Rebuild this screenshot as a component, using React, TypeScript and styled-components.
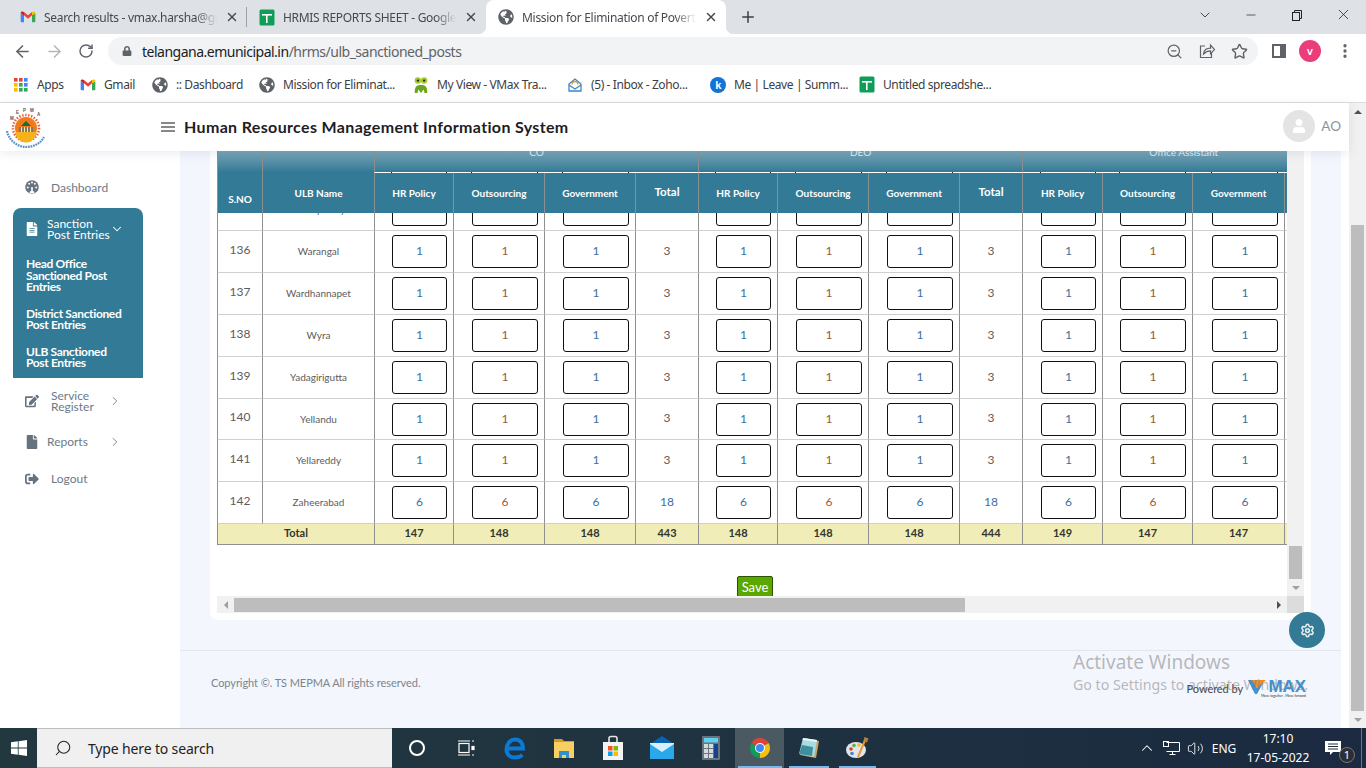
import React from 'react';
import styled, { createGlobalStyle } from 'styled-components';
import {
  ArrowLeft,
  ArrowRight,
  ChevronDown,
  ChevronRight,
  ChevronUp,
  MoreVertical,
  Plus,
  RotateCw,
  Settings,
  Star,
  Volume2,
  X,
  ZoomOut,
  Search,
  Minus,
} from 'lucide-react';
import {
  FaEdit,
  FaFile,
  FaFileAlt,
  FaGlobeAmericas,
  FaLock,
  FaSignOutAlt,
  FaUser,
} from 'react-icons/fa';

const APP_FONT = '"Lato", "Noto Sans", sans-serif';
const UI_FONT = '"Noto Sans", "Open Sans", sans-serif';
const TEAL = '#337a96';

const GlobalStyle = createGlobalStyle`
  html, body {
    margin: 0;
    padding: 0;
    width: 1366px;
    height: 768px;
    overflow: hidden;
    background: #fff;
  }
  * { box-sizing: border-box; }
`;

const Screen = styled.div`
  position: relative;
  width: 1366px;
  height: 768px;
  display: flex;
  flex-direction: column;
  overflow: hidden;
  font-family: ${APP_FONT};
`;

/* browser chrome */
const TabStrip = styled.div`
  height: 34px;
  background: #dee1e6;
  display: flex;
  align-items: stretch;
  padding-left: 8px;
  font-family: ${UI_FONT};
`;

const Tab = styled.div<{ $w: number; $active?: boolean }>`
  position: relative;
  width: ${(p) => p.$w}px;
  padding: 0 8px 0 12px;
  display: flex;
  align-items: center;
  gap: 8px;
  background: ${(p) => (p.$active ? '#fff' : 'transparent')};
  border-radius: 8px 8px 0 0;
  ${(p) =>
    p.$active &&
    `
    &::before, &::after {
      content: '';
      position: absolute;
      bottom: 0;
      width: 8px;
      height: 8px;
    }
    &::before { left: -8px; background: radial-gradient(circle at 0 0, transparent 8px, #fff 8.5px); }
    &::after { right: -8px; background: radial-gradient(circle at 100% 0, transparent 8px, #fff 8.5px); }
  `}
`;

const TabTitle = styled.span`
  flex: 1;
  min-width: 0;
  font-size: 12px;
  letter-spacing: -0.3px;
  white-space: nowrap;
  overflow: hidden;
  color: #45494e;
  -webkit-mask-image: linear-gradient(90deg, #000 88%, transparent);
  mask-image: linear-gradient(90deg, #000 88%, transparent);
`;

const TabDivider = styled.i`
  width: 1px;
  height: 20px;
  margin: 7px 0 0 -1px;
  background: #9da1a6;
`;

const NewTab = styled.div`
  width: 28px;
  margin-left: 8px;
  display: flex;
  align-items: center;
  justify-content: center;
  color: #3c4043;
`;

const WindowControls = styled.div`
  margin-left: auto;
  display: flex;
  align-items: flex-start;
  color: #222;
`;

const WinButton = styled.div<{ $w: number }>`
  width: ${(p) => p.$w}px;
  height: 29px;
  display: flex;
  align-items: center;
  justify-content: center;
`;

const Toolbar = styled.div`
  height: 34px;
  background: #fff;
  display: flex;
  align-items: center;
  padding-left: 6px;
  color: #5f6368;
`;

const NavButton = styled.div<{ $faded?: boolean }>`
  width: 32px;
  display: flex;
  justify-content: center;
  color: ${(p) => (p.$faded ? '#b4b7ba' : '#5f6368')};
`;

const Omnibox = styled.div`
  width: 1150px;
  height: 28px;
  margin-left: 6px;
  padding: 0 10px 0 14px;
  border-radius: 14px;
  background: #f1f3f4;
  display: flex;
  align-items: center;
  font-family: ${UI_FONT};
`;

const UrlText = styled.div`
  margin-left: 10px;
  font-size: 14px;
  letter-spacing: -0.5px;
  color: #202124;
  span { color: #5f6368; }
`;

const OmniActions = styled.div`
  margin-left: auto;
  display: flex;
  align-items: center;
  gap: 15px;
  color: #5f6368;
`;

const ToolbarEnd = styled.div`
  display: flex;
  align-items: center;
  margin-left: 13px;
`;

const ProfileDot = styled.div`
  width: 22px;
  height: 22px;
  margin-left: 12px;
  border-radius: 50%;
  background: #ec3d7b;
  color: #fff;
  font-size: 9px;
  font-weight: 700;
  display: flex;
  align-items: center;
  justify-content: center;
  font-family: ${UI_FONT};
`;

const MenuDots = styled.div`
  margin-left: 15px;
  display: flex;
`;

const BookmarkBar = styled.div`
  height: 35px;
  padding: 0 0 1px 13px;
  background: #fff;
  border-bottom: 1px solid #dadce0;
  display: flex;
  align-items: center;
  font-family: ${UI_FONT};
`;

const Bookmark = styled.div<{ $w: number }>`
  width: ${(p) => p.$w}px;
  display: flex;
  align-items: center;
  gap: 8px;
  font-size: 12px;
  letter-spacing: -0.4px;
  color: #3c4043;
  white-space: nowrap;
  overflow: hidden;
  svg { flex: none; }
`;

/* page */
const Viewport = styled.div`
  flex: 1;
  min-height: 0;
  display: flex;
`;

const PageColumn = styled.div`
  flex: 1;
  min-width: 0;
  display: flex;
  flex-direction: column;
`;

const TopBar = styled.header`
  position: relative;
  z-index: 2;
  height: 48px;
  flex: none;
  background: #fff;
  box-shadow: 0 2px 10px rgba(60, 80, 120, 0.12);
  display: flex;
  align-items: center;
  padding: 0 0 2px 5px;
`;

const LogoBox = styled.div`
  display: flex;
  margin-top: 3px;
`;

const Hamburger = styled.div`
  width: 14px;
  height: 10px;
  margin: 2px 9px 0 115px;
  border-top: 2px solid #888;
  border-bottom: 2px solid #888;
  position: relative;
  &::after {
    content: '';
    position: absolute;
    left: 0;
    right: 0;
    top: 2px;
    height: 2px;
    background: #888;
  }
`;

const SystemTitle = styled.h1`
  margin: 0;
  font-size: 16px;
  font-weight: 700;
  letter-spacing: 0.35px;
  color: #1c2024;
`;

const UserBox = styled.div`
  margin-left: auto;
  display: flex;
  align-items: center;
  gap: 6px;
  padding-right: 8px;
  color: #8a949c;
  font-size: 13.5px;
`;

const Avatar = styled.div`
  width: 32px;
  height: 32px;
  border-radius: 50%;
  background: #e4e4e4;
  color: #fff;
  display: flex;
  align-items: center;
  justify-content: center;
`;

const Below = styled.div`
  flex: 1;
  min-height: 0;
  display: flex;
`;

const Sidebar = styled.nav`
  width: 180px;
  flex: none;
  padding-top: 17px;
  background: #fff;
  font-size: 12px;
  color: #6b7a88;
`;

const NavRow = styled.div<{ $h: number }>`
  height: ${(p) => p.$h}px;
  padding: 0 58px 0 25px;
  display: flex;
  align-items: center;
  line-height: 11px;
`;

const IconSlot = styled.span<{ $w?: number }>`
  width: ${(p) => p.$w ?? 26}px;
  flex: none;
  display: flex;
  color: #66727e;
`;

const NavArrow = styled.span`
  margin-left: auto;
  display: flex;
`;

const ActivePanel = styled.div`
  width: 130px;
  margin: 2px 0 0 13px;
  padding: 10px 21px 9px 12px;
  border-radius: 8px 8px 0 0;
  background: ${TEAL};
  color: #fff;
  font-size: 12px;
  line-height: 11.5px;
`;

const PanelHead = styled.div`
  display: flex;
  align-items: center;
  margin-bottom: 18px;
  line-height: 11px;
  white-space: nowrap;
  svg { flex: none; }
`;

const PanelIcon = styled.span`
  width: 22px;
  flex: none;
  display: flex;
`;

const PanelLink = styled.div`
  margin: 0 -20px 15px 1px;
  font-weight: 700;
  letter-spacing: -0.35px;
  white-space: nowrap;
  &:last-child { margin-bottom: 0; }
`;

const Main = styled.main`
  flex: 1;
  min-width: 0;
  display: flex;
  flex-direction: column;
  margin-right: 8px;
  background: #f3f6fd;
`;

const Card = styled.section`
  height: 469px;
  flex: none;
  margin: 0 30px;
  padding: 0 7px 7px;
  background: #fff;
  border-radius: 0 0 8px 8px;
`;

const ScrollFrame = styled.div`
  height: 462px;
  display: grid;
  grid-template-columns: 1070px 17px;
  grid-template-rows: 445px 17px;
`;

const TableViewport = styled.div`
  overflow: hidden;
  background: #fff;
`;

const GridTable = styled.table<{ $width: number }>`
  width: ${(p) => p.$width}px;
  table-layout: fixed;
  border-collapse: separate;
  border-spacing: 0;
`;

const HeadTable = styled(GridTable)`
  position: relative;
  z-index: 1;
  margin-top: -6px;
  background: linear-gradient(#8fb2c1 0, ${TEAL} 27px);
  color: #fff;
`;

const CornerHead = styled.th<{ $pb: number }>`
  vertical-align: bottom;
  padding: 0 0 ${(p) => p.$pb}px;
  border-left: 1px solid #8a8f92;
  font-size: 10px;
  font-weight: 700;
`;

const GroupHead = styled.th`
  height: 28px;
  vertical-align: top;
  padding: 2px 0 0;
  border-left: 1px solid #8a8f92;
  border-bottom: 1px solid #fff;
  font-size: 10px;
  line-height: 10px;
  font-weight: 400;
  color: #e3edf1;
`;

const SubHead = styled.th<{ $isTotal?: boolean; $tickW?: number }>`
  position: relative;
  height: 40px;
  padding: 0 0 ${(p) => (p.$isTotal ? 4 : 0)}px;
  border-left: 1px solid #8a8f92;
  font-size: ${(p) => (p.$isTotal ? 11.5 : 10)}px;
  font-weight: 700;
  ${(p) =>
    !p.$isTotal &&
    `
    &::before, &::after {
      content: '';
      position: absolute;
      top: -1px;
      width: 1px;
      height: 1px;
      background: #222;
    }
    &::before { right: ${(p.$tickW ?? 0) + 6}px; }
    &::after { right: 6px; }
  `}
`;

const BodyClip = styled.div`
  height: 311px;
  overflow: hidden;
`;

const BodyTable = styled(GridTable)`
  margin-top: -24px;
`;

const BodyCell = styled.td<{ $tone?: string; $small?: boolean; $h?: number; $pb?: number }>`
  height: ${(p) => p.$h ?? 42}px;
  padding: 0 0 ${(p) => p.$pb ?? (p.$small ? 1 : 3)}px;
  text-align: center;
  border-left: 1px solid #8f8f8f;
  border-bottom: 1px solid #cfcfcf;
  font-size: ${(p) => (p.$small ? 10 : 12)}px;
  color: ${(p) => p.$tone ?? '#5c5c5c'};
`;

const InputCell = styled(BodyCell)`
  padding: 0 6px 0 0;
`;

const CountInput = styled.input<{ $w: number; $tone: string }>`
  display: block;
  width: ${(p) => p.$w}px;
  height: 33px;
  margin-left: auto;
  padding: 0 0 2px;
  border: 1px solid #111;
  border-radius: 3px;
  background: #fff;
  outline: none;
  text-align: center;
  font-family: ${APP_FONT};
  font-size: 12px;
  color: ${(p) => p.$tone};
`;

const FootCell = styled.td`
  height: 21px;
  padding: 0 0 3px;
  text-align: center;
  background: #f0edb8;
  border-left: 1px solid #8f8f8f;
  border-bottom: 1px solid #8f8f8f;
  font-size: 11px;
  font-weight: 700;
  color: #33352f;
`;

const SaveRow = styled.div`
  display: flex;
  justify-content: center;
  padding: 31px 0 0 6px;
`;

const SaveButton = styled.button`
  width: 36px;
  height: 21px;
  padding: 0;
  border: 1px solid #2c5300;
  border-radius: 2px;
  background: #5aa700;
  color: #fff;
  font-family: ${APP_FONT};
  font-size: 13px;
`;

const ScrollTrackY = styled.div`
  background: #f1f1f1;
  display: flex;
  flex-direction: column;
  justify-content: flex-end;
  align-items: center;
`;

const ThumbY = styled.div<{ $h: number; $w: number }>`
  width: ${(p) => p.$w}px;
  height: ${(p) => p.$h}px;
  background: #bdbdbd;
`;

const ScrollTrackX = styled.div`
  background: #f1f1f1;
  display: flex;
  align-items: center;
`;

const ThumbX = styled.div`
  width: 731px;
  height: 14px;
  background: #bdbdbd;
`;

const ScrollButton = styled.div<{ $end?: boolean }>`
  width: 17px;
  height: 17px;
  flex: none;
  margin-left: ${(p) => (p.$end ? 'auto' : '0')};
  display: flex;
  align-items: center;
  justify-content: center;
`;

const ArrowGlyph = styled.i<{ $dir: 'up' | 'down' | 'left' | 'right'; $color?: string }>`
  width: 0;
  height: 0;
  border: 4px solid transparent;
  ${(p) => {
    const c = p.$color ?? '#505050';
    if (p.$dir === 'up') return `border-bottom-color:${c};border-top-width:0;`;
    if (p.$dir === 'down') return `border-top-color:${c};border-bottom-width:0;`;
    if (p.$dir === 'left') return `border-right-color:${c};border-left-width:0;`;
    return `border-left-color:${c};border-right-width:0;`;
  }}
`;

const ScrollCorner = styled.div`
  background: #dcdcdc;
`;

const PageScrollbar = styled.div`
  width: 17px;
  flex: none;
  background: #f1f1f1;
  display: flex;
  flex-direction: column;
  align-items: center;
`;

const PageThumbWrap = styled.div`
  margin-top: auto;
  display: flex;
  flex-direction: column;
  align-items: center;
`;

const Footer = styled.footer`
  flex: 1;
  margin-top: 30px;
  padding: 0 35px 15px 31px;
  border-top: 1px solid #e2e6ee;
  display: flex;
  justify-content: space-between;
  align-items: center;
  font-size: 11px;
  letter-spacing: -0.07px;
  color: #7c858c;
`;

const PoweredBy = styled.div`
  display: flex;
  align-items: center;
  gap: 3px;
  margin-top: 12px;
  color: #444;
`;

const VmaxLogo = styled.div`
  display: flex;
  flex-direction: column;
  align-items: flex-end;
  width: 60px;
`;

const VmaxMark = styled.div`
  display: flex;
  align-items: center;
  font-family: "Liberation Sans", sans-serif;
  font-size: 17px;
  font-weight: 700;
  line-height: 15px;
  color: #3f93d8;
`;

const VmaxTag = styled.div`
  font-size: 3.5px;
  line-height: 4px;
  color: #333;
  white-space: nowrap;
`;

const GearFab = styled.div`
  position: absolute;
  left: 1289px;
  top: 612px;
  width: 36px;
  height: 36px;
  border-radius: 50%;
  background: ${TEAL};
  color: #e8f0f3;
  display: flex;
  align-items: center;
  justify-content: center;
`;

const Watermark = styled.div`
  position: absolute;
  left: 1073px;
  top: 650px;
  pointer-events: none;
  font-family: ${UI_FONT};
  color: rgba(120, 120, 120, 0.5);
  white-space: nowrap;
`;

const WatermarkTitle = styled.div`
  font-size: 19px;
  line-height: 24px;
`;

const WatermarkHint = styled.div`
  font-size: 14.2px;
  line-height: 21px;
`;

/* windows taskbar */
const Taskbar = styled.div`
  height: 40px;
  flex: none;
  background: linear-gradient(90deg, #22383f, #1f3340 50%, #1b2a40);
  display: flex;
  align-items: stretch;
  color: #fff;
  font-family: ${UI_FONT};
`;

const StartButton = styled.div`
  width: 37px;
  display: flex;
  align-items: center;
  justify-content: center;
`;

const SearchBox = styled.div`
  width: 355px;
  background: #f0f0f0;
  border-top: 1px solid #bdbdbd;
  border-bottom: 1px solid #bdbdbd;
  display: flex;
  align-items: center;
  padding-left: 17px;
  gap: 16px;
  font-size: 14px;
  letter-spacing: -0.15px;
  color: #222;
`;

const SearchGlass = styled(Search)`
  transform: scaleX(-1);
`;

const TaskSlot = styled.div<{ $active?: boolean; $line?: number }>`
  position: relative;
  width: 49px;
  display: flex;
  align-items: center;
  justify-content: center;
  background: ${(p) => (p.$active ? '#4a5962' : 'transparent')};
  ${(p) =>
    p.$line &&
    `
    &::after {
      content: '';
      position: absolute;
      bottom: 0;
      left: 50%;
      width: ${p.$line}px;
      margin-left: -${p.$line / 2}px;
      height: 2px;
      background: #76b9ed;
    }
  `}
`;

const Tray = styled.div`
  margin-left: auto;
  display: flex;
  align-items: stretch;
`;

const TraySlot = styled.div<{ $w: number }>`
  width: ${(p) => p.$w}px;
  display: flex;
  align-items: center;
  justify-content: center;
  font-size: 12px;
`;

const Clock = styled.div`
  width: 74px;
  display: flex;
  flex-direction: column;
  align-items: center;
  justify-content: center;
  font-size: 12px;
  line-height: 19px;
`;

const NoticeSlot = styled.div`
  position: relative;
  width: 46px;
  padding: 11px 0 0 10px;
`;

const NoticeBadge = styled.div`
  position: absolute;
  left: 24px;
  top: 19px;
  width: 16px;
  height: 16px;
  border-radius: 50%;
  border: 1px solid #777;
  background: #2b2f33;
  font-size: 11px;
  line-height: 14px;
  text-align: center;
`;

const TrayEnd = styled.div`
  width: 5px;
  border-left: 1px solid #6d7780;
`;

/* drawn icons */
const GmailIcon = () => (
  <svg width="16" height="16" viewBox="0 0 24 24">
    <path fill="#4285f4" d="M1 6.5 6 9v11H2.5A1.5 1.5 0 0 1 1 18.500z" />
    <path fill="#34a853" d="M23 6.500 18 9v11h3.500a1.500 1.500 0 0 0 1.500-1.500z" />
    <path fill="#ea4335" d="M6 9.500V4.500L12 9.500 18 4.500v5l-6 5z" />
    <path fill="#c5221f" d="M1 5.800C1 4 3.400 3 4.800 4.100L6 5v4.700L1 6z" />
    <path fill="#fbbc04" d="M23 5.800C23 4 20.600 3 19.200 4.100L18 5v4.700L23 6z" />
  </svg>
);

const SheetIcon = () => (
  <svg width="16" height="17" viewBox="0 0 16 17">
    <rect x="0.500" y="0.500" width="15" height="16" rx="1.500" fill="#0f9d58" />
    <rect x="3" y="5" width="10" height="1.600" fill="#fff" />
    <rect x="7" y="5" width="1.600" height="9" fill="#fff" />
  </svg>
);

const AppsIcon = () => (
  <svg width="16" height="16" viewBox="0 0 16 16">
    {['#ea4335', '#ea4335', '#4285f4', '#fbbc04', '#34a853', '#4285f4', '#fbbc04', '#34a853', '#34a853'].map((c, i) => (
      <rect key={i} x={1 + (i % 3) * 5} y={1 + Math.floor(i / 3) * 5} width="3.600" height="3.600" fill={c} />
    ))}
  </svg>
);

const FrogIcon = () => (
  <svg width="16" height="18" viewBox="0 0 18 20">
    <path d="M2 19c0-6 1-9 7-9s7 3 7 9h-3l-1-4-3 4-3-4-1 4z" fill="#6aa51f" />
    <circle cx="5.500" cy="5" r="3.600" fill="#a6c92f" />
    <circle cx="12.500" cy="5" r="3.600" fill="#a6c92f" />
    <circle cx="5.500" cy="5" r="1.300" fill="#222" />
    <circle cx="12.500" cy="5" r="1.300" fill="#222" />
  </svg>
);

const ZohoIcon = () => (
  <svg width="16" height="16" viewBox="0 0 16 16" fill="none">
    <path d="M2 7l6-5 6 5v7H2z" stroke="#3a87c8" strokeWidth="1.300" />
    <path d="M2 8l6 4 6-4" stroke="#3a87c8" strokeWidth="1.300" />
    <path d="M5 7.500a3 3 0 0 1 6 0" stroke="#e8912d" strokeWidth="1.300" />
  </svg>
);

const KekaIcon = () => (
  <svg width="16" height="16" viewBox="0 0 16 16">
    <circle cx="8" cy="8" r="8" fill="#1473d8" />
    <text x="8" y="12" fontSize="11" fontWeight="700" fill="#fff" textAnchor="middle" fontFamily="Liberation Sans">k</text>
  </svg>
);

const ShareIcon = () => (
  <svg width="18" height="18" viewBox="0 0 18 18" fill="none" stroke="#5f6368" strokeWidth="1.200">
    <path d="M7 4H2.500v11.500h11V11" />
    <path d="M5.500 12c.5-4 3-5.800 7-5.800V3l4 4.500-4 4.300V8.800c-3 0-5 1-7 3.200z" />
  </svg>
);

const SidePanelIcon = () => (
  <svg width="16" height="16" viewBox="0 0 16 16">
    <rect x="1" y="1" width="14" height="14" fill="#5f6368" />
    <rect x="3" y="3" width="6" height="10" fill="#fff" />
  </svg>
);

const RestoreIcon = () => (
  <svg width="12" height="12" viewBox="0 0 12 12" fill="none" stroke="#222">
    <rect x="1.500" y="3.500" width="7" height="8" />
    <path d="M3.500 3.500v-2h7v8h-2" />
  </svg>
);

const GaugeIcon = () => (
  <svg width="14" height="14" viewBox="0 0 14 14">
    <circle cx="7" cy="7" r="6.800" fill="#66727e" />
    <g fill="#fff">
      <circle cx="2.800" cy="7.500" r="1" />
      <circle cx="4.200" cy="3.800" r="1" />
      <circle cx="7" cy="2.500" r="1" />
      <circle cx="9.800" cy="3.800" r="1" />
      <circle cx="11.200" cy="7.500" r="1" />
    </g>
    <path d="M7 12V7" stroke="#fff" strokeWidth="1.600" />
    <path d="M4.500 13.200h5L9 11.200H5z" fill="#fff" />
  </svg>
);

const MepmaLogo = () => (
  <svg width="41" height="42" viewBox="0 0 41 42">
    <g fontSize="4.500" fontWeight="700" fill="#555" fontFamily="Liberation Sans">
      <text x="5" y="13">M</text>
      <text x="11" y="7">E</text>
      <text x="18" y="4.500">P</text>
      <text x="25" y="5">M</text>
      <text x="32" y="9">A</text>
    </g>
    <circle cx="21" cy="21" r="13" fill="none" stroke="#ea5a2c" strokeWidth="2.600" strokeDasharray="1.400 1.600" />
    <circle cx="21" cy="21" r="11" fill="#f07b1c" />
    <path d="M10.500 25h21a10.500 10.500 0 0 1-21 0z" fill="#f5b21a" />
    <path d="M21 14l5 5H16z" fill="#1e6a3a" />
    <rect x="14" y="20" width="14" height="5" fill="#fbe6a8" />
    <path d="M15 20v5M18 20v5M21 20v5M24 20v5M27 20v5" stroke="#30303a" strokeWidth="1.200" />
    <path d="M2 24c2 10 11 16 19 16s15-4 18-10" fill="none" stroke="#5c93c9" strokeWidth="2.200" strokeDasharray="1.800 .8" />
  </svg>
);

const WindowsLogo = () => (
  <svg width="16" height="16" viewBox="0 0 16 16" fill="#fff">
    <path d="M0 2.300 6.800 1.300v6.300H0zM7.600 1.200 16 0v7.600H7.600zM0 8.400h6.800v6.300L0 13.700zM7.600 8.400H16V16l-8.400-1.200z" />
  </svg>
);

const TaskViewIcon = () => (
  <svg width="18" height="18" viewBox="0 0 18 18" fill="none" stroke="#fff" strokeWidth="1.200">
    <rect x="2" y="4.500" width="10" height="9" />
    <path d="M1 2h12M1 16h12M15 2h2M15 16h2" />
    <rect x="15" y="7.500" width="2" height="3" fill="#fff" />
  </svg>
);

const EdgeIcon = () => (
  <svg width="24" height="24" viewBox="0 0 24 24" fill="none">
    <path d="M4.500 12.500H20C20 7 17 3.500 12 3.500 7 3.500 3.500 8 3.500 13.500 3.500 18.500 7 21.500 12 21.500c3 0 5.500-.8 7.500-2.300" stroke="#0a7ad6" strokeWidth="4" />
  </svg>
);

const ExplorerIcon = () => (
  <svg width="24" height="24" viewBox="0 0 24 24">
    <path d="M2 3h8l2 2h10v4H2z" fill="#d99a1e" />
    <rect x="2" y="6" width="20" height="16" fill="#f7cf62" />
    <path d="M7 22v-7h10v7h-3v-3h-4v3z" fill="#2f8fd0" />
  </svg>
);

const StoreIcon = () => (
  <svg width="24" height="26" viewBox="0 0 24 26">
    <path d="M8 7V3.500a2 2 0 0 1 2-2h4a2 2 0 0 1 2 2V7" fill="none" stroke="#e4e4e4" strokeWidth="1.600" />
    <rect x="2" y="7" width="20" height="18" fill="#f3f3f3" />
    <rect x="7" y="11" width="4.500" height="4.500" fill="#f25022" />
    <rect x="12.500" y="11" width="4.500" height="4.500" fill="#7fba00" />
    <rect x="7" y="16.500" width="4.500" height="4.500" fill="#00a4ef" />
    <rect x="12.500" y="16.500" width="4.500" height="4.500" fill="#ffb900" />
  </svg>
);

const MailIcon = () => (
  <svg width="26" height="26" viewBox="0 0 26 26">
    <path d="M1 9 13 1l12 8v15H1z" fill="#0b62b5" />
    <path d="M1 9h24v15H1z" fill="#29a9ec" />
    <path d="M1 9l12 8 12-8v-1H1z" fill="#d8f0fb" />
  </svg>
);

const CalculatorIcon = () => (
  <svg width="18" height="24" viewBox="0 0 18 24">
    <rect width="18" height="24" rx="1" fill="#69747c" />
    <rect x="2" y="2" width="14" height="4.500" fill="#5fd0ee" />
    {[0, 1, 2].map((r) =>
      [0, 1].map((c) => <rect key={`${r}${c}`} x={2 + c * 5} y={8 + r * 5} width="4" height="4" fill="#d6dade" />),
    )}
    <rect x="12" y="8" width="4" height="14" fill="#14438c" />
  </svg>
);

const ChromeIcon = () => (
  <svg width="24" height="24" viewBox="0 0 48 48">
    <path fill="#db4437" d="M24 24 6.680 14A20 20 0 0 1 41.320 14Z" />
    <path fill="#f4c20d" d="M24 24 41.320 14A20 20 0 0 1 24 44Z" />
    <path fill="#0f9d58" d="M24 24V44A20 20 0 0 1 6.680 14Z" />
    <circle cx="24" cy="24" r="10" fill="#fff" />
    <circle cx="24" cy="24" r="8" fill="#4285f4" />
  </svg>
);

const NotepadIcon = () => (
  <svg width="24" height="24" viewBox="0 0 24 24">
    <path d="M7 2 22 5l-3 17L3 19z" fill="#c9a866" />
    <path d="M6 2 20 4l-3 17L2 18z" fill="#a9dbe2" />
    <path d="M5 9l11 2-1 9L2 18z" fill="#3f8f9e" />
    <path d="M6 2l14 2-.5 2L5.500 4z" fill="#e9f5f6" />
  </svg>
);

const PaintIcon = () => (
  <svg width="26" height="26" viewBox="0 0 26 26">
    <ellipse cx="11" cy="15" rx="10" ry="8" fill="#e2e6ea" />
    <circle cx="6" cy="14" r="1.800" fill="#d9412b" />
    <circle cx="9" cy="10.500" r="1.800" fill="#5ab04a" />
    <circle cx="14" cy="10" r="1.800" fill="#e8c02c" />
    <circle cx="7" cy="18.500" r="1.800" fill="#3f86d2" />
    <path d="M21 3 13 22" stroke="#e89a35" strokeWidth="2" />
    <path d="M19.500 2l4 1.500-1.500 4-3.500-1.500z" fill="#b97d3a" />
  </svg>
);

const NetworkIcon = () => (
  <svg width="17" height="15" viewBox="0 0 17 15" fill="none" stroke="#fff">
    <path d="M3.500 1.500h13v9h-13M9.500 10.500v3M6.500 13.500h6" />
    <rect x="0.500" y="0.500" width="5" height="5" />
  </svg>
);

const NoticeIcon = () => (
  <svg width="16" height="15" viewBox="0 0 16 15">
    <path d="M0 0h16v11H8l-3 3v-3H0z" fill="#fff" />
    <path d="M3 3h10M3 5.500h10M3 8h10" stroke="#1d2c40" />
  </svg>
);

const VmaxCheck = () => (
  <svg width="20" height="15" viewBox="0 0 20 15">
    <path d="M0 1h5l4 8 3-5h3l-6 11H7z" fill="#3f93d8" />
    <path d="M4 1h14l-9 8z" fill="#ef8d22" />
  </svg>
);

const COLS = [45, 112, 79, 91, 91, 63, 79, 91, 91, 63, 80, 90, 92, 60];
const TABLE_WIDTH = COLS.reduce((a, b) => a + b, 0);
const BLUE = '#3c6f9e';
const BROWN = '#9a5a3a';
const TOTAL_TONE = '#6b5a58';

const ROWS: { sno: number; name: string; value: number; total: number; h?: number }[] = [
  { sno: 135, name: 'Wanaparthy', value: 1, total: 3 },
  { sno: 136, name: 'Warangal', value: 1, total: 3 },
  { sno: 137, name: 'Wardhannapet', value: 1, total: 3 },
  { sno: 138, name: 'Wyra', value: 1, total: 3 },
  { sno: 139, name: 'Yadagirigutta', value: 1, total: 3 },
  { sno: 140, name: 'Yellandu', value: 1, total: 3, h: 41 },
  { sno: 141, name: 'Yellareddy', value: 1, total: 3 },
  { sno: 142, name: 'Zaheerabad', value: 6, total: 18 },
];

const FOOT_TOTALS = [147, 148, 148, 443, 148, 148, 148, 444, 149, 147, 147, 441];
const POST_GROUPS = ['CO', 'DEO', 'Office Assistant'];

const ColumnSizes = () => (
  <colgroup>
    {COLS.map((w, i) => (
      <col key={i} width={w} />
    ))}
  </colgroup>
);

function inputsFor(group: number) {
  return [
    { key: `${group}hr`, w: 55, tone: BLUE, title: 'HR Policy' },
    { key: `${group}out`, w: 66, tone: BROWN, title: 'Outsourcing' },
    { key: `${group}gov`, w: 66, tone: BLUE, title: 'Government' },
  ];
}

function SanctionTable() {
  return (
    <TableViewport>
      <HeadTable $width={TABLE_WIDTH}>
        <ColumnSizes />
        <thead>
          <tr>
            <CornerHead rowSpan={2} $pb={8}>S.NO</CornerHead>
            <CornerHead rowSpan={2} $pb={14}>ULB Name</CornerHead>
            {POST_GROUPS.map((g) => (
              <GroupHead key={g} colSpan={4}>{g}</GroupHead>
            ))}
          </tr>
          <tr>
            {POST_GROUPS.map((g, gi) => (
              <React.Fragment key={g}>
                {inputsFor(gi).map((c) => (
                  <SubHead key={c.key} $tickW={c.w}>{c.title}</SubHead>
                ))}
                <SubHead $isTotal>Total</SubHead>
              </React.Fragment>
            ))}
          </tr>
        </thead>
      </HeadTable>
      <BodyClip>
        <BodyTable $width={TABLE_WIDTH}>
          <ColumnSizes />
          <tbody>
            {ROWS.map((row) => (
              <tr key={row.sno}>
                <BodyCell $h={row.h} $pb={5}>{row.sno}</BodyCell>
                <BodyCell $h={row.h} $small>{row.name}</BodyCell>
                {POST_GROUPS.map((g, gi) => (
                  <React.Fragment key={g}>
                    {inputsFor(gi).map((c) => (
                      <InputCell key={c.key} $h={row.h}>
                        <CountInput readOnly value={row.value} $w={c.w} $tone={c.tone} />
                      </InputCell>
                    ))}
                    <BodyCell $h={row.h} $tone={row.total > 9 ? BLUE : TOTAL_TONE}>{row.total}</BodyCell>
                  </React.Fragment>
                ))}
              </tr>
            ))}
          </tbody>
        </BodyTable>
      </BodyClip>
      <GridTable $width={TABLE_WIDTH}>
        <ColumnSizes />
        <tfoot>
          <tr>
            <FootCell colSpan={2}>Total</FootCell>
            {FOOT_TOTALS.map((t, i) => (
              <FootCell key={i}>{t}</FootCell>
            ))}
          </tr>
        </tfoot>
      </GridTable>
      <SaveRow>
        <SaveButton type="button">Save</SaveButton>
      </SaveRow>
    </TableViewport>
  );
}

export default function App() {
  return (
    <Screen>
      <GlobalStyle />
      <TabStrip>
        <Tab $w={239}>
          <GmailIcon />
          <TabTitle>Search results - vmax.harsha@gmail.com</TabTitle>
          <X size={14} strokeWidth={2.4} color="#45494e" />
        </Tab>
        <TabDivider />
        <Tab $w={239}>
          <SheetIcon />
          <TabTitle>HRMIS REPORTS SHEET - Google Sheets</TabTitle>
          <X size={14} strokeWidth={2.4} color="#45494e" />
        </Tab>
        <Tab $w={240} $active>
          <FaGlobeAmericas size={16} color="#5f6368" />
          <TabTitle>Mission for Elimination of Poverty in Municipal Areas</TabTitle>
          <X size={14} strokeWidth={2.4} color="#45494e" />
        </Tab>
        <NewTab>
          <Plus size={18} strokeWidth={2} />
        </NewTab>
        <WindowControls>
          <WinButton $w={46}><ChevronDown size={16} strokeWidth={1.2} /></WinButton>
          <WinButton $w={46}><Minus size={14} strokeWidth={1.2} /></WinButton>
          <WinButton $w={46}><RestoreIcon /></WinButton>
          <WinButton $w={46}><X size={17} strokeWidth={1.1} /></WinButton>
        </WindowControls>
      </TabStrip>

      <Toolbar>
        <NavButton><ArrowLeft size={19} strokeWidth={2} /></NavButton>
        <NavButton $faded><ArrowRight size={19} strokeWidth={2} /></NavButton>
        <NavButton><RotateCw size={16} strokeWidth={2.2} /></NavButton>
        <Omnibox>
          <FaLock size={10} color="#5f6368" />
          <UrlText>telangana.emunicipal.in<span>/hrms/ulb_sanctioned_posts</span></UrlText>
          <OmniActions>
            <ZoomOut size={17} strokeWidth={1.7} />
            <ShareIcon />
            <Star size={17} strokeWidth={2} />
          </OmniActions>
        </Omnibox>
        <ToolbarEnd>
          <SidePanelIcon />
          <ProfileDot>V</ProfileDot>
          <MenuDots><MoreVertical size={18} strokeWidth={2.4} /></MenuDots>
        </ToolbarEnd>
      </Toolbar>

      <BookmarkBar>
        <Bookmark $w={67}><AppsIcon /><span>Apps</span></Bookmark>
        <Bookmark $w={72}><GmailIcon /><span>Gmail</span></Bookmark>
        <Bookmark $w={107}><FaGlobeAmericas size={16} color="#5f6368" /><span>:: Dashboard</span></Bookmark>
        <Bookmark $w={154}><FaGlobeAmericas size={16} color="#5f6368" /><span>Mission for Eliminat...</span></Bookmark>
        <Bookmark $w={154}><FrogIcon /><span>My View - VMax Tra...</span></Bookmark>
        <Bookmark $w={143}><ZohoIcon /><span>(5) - Inbox - Zoho...</span></Bookmark>
        <Bookmark $w={149}><KekaIcon /><span>Me | Leave | Summ...</span></Bookmark>
        <Bookmark $w={150}><SheetIcon /><span>Untitled spreadshe...</span></Bookmark>
      </BookmarkBar>

      <Viewport>
        <PageColumn>
          <TopBar>
            <LogoBox><MepmaLogo /></LogoBox>
            <Hamburger />
            <SystemTitle>Human Resources Management Information System</SystemTitle>
            <UserBox>
              <Avatar><FaUser size={14} /></Avatar>
              AO
            </UserBox>
          </TopBar>
          <Below>
            <Sidebar>
              <NavRow $h={38}>
                <IconSlot><GaugeIcon /></IconSlot>
                Dashboard
              </NavRow>
              <ActivePanel>
                <PanelHead>
                  <PanelIcon><FaFileAlt size={14} color="#fff" /></PanelIcon>
                  <span>Sanction<br />Post Entries</span>
                  <NavArrow><ChevronDown size={14} strokeWidth={1.8} /></NavArrow>
                </PanelHead>
                <PanelLink>Head Office<br />Sanctioned Post<br />Entries</PanelLink>
                <PanelLink>District Sanctioned<br />Post Entries</PanelLink>
                <PanelLink>ULB Sanctioned<br />Post Entries</PanelLink>
              </ActivePanel>
              <NavRow $h={46}>
                <IconSlot><FaEdit size={14} /></IconSlot>
                <span>Service<br />Register</span>
                <NavArrow><ChevronRight size={14} strokeWidth={1.5} /></NavArrow>
              </NavRow>
              <NavRow $h={36}>
                <IconSlot $w={22}><FaFile size={14} /></IconSlot>
                Reports
                <NavArrow><ChevronRight size={14} strokeWidth={1.5} /></NavArrow>
              </NavRow>
              <NavRow $h={38}>
                <IconSlot><FaSignOutAlt size={14} /></IconSlot>
                Logout
              </NavRow>
            </Sidebar>
            <Main>
              <Card>
                <ScrollFrame>
                  <SanctionTable />
                  <ScrollTrackY>
                    <ThumbY $w={13} $h={33} />
                    <ScrollButton><ArrowGlyph $dir="down" $color="#a0a0a0" /></ScrollButton>
                  </ScrollTrackY>
                  <ScrollTrackX>
                    <ScrollButton><ArrowGlyph $dir="left" $color="#a0a0a0" /></ScrollButton>
                    <ThumbX />
                    <ScrollButton $end><ArrowGlyph $dir="right" /></ScrollButton>
                  </ScrollTrackX>
                  <ScrollCorner />
                </ScrollFrame>
              </Card>
              <Footer>
                <span>Copyright ©. TS MEPMA All rights reserved.</span>
                <PoweredBy>
                  Powered by
                  <VmaxLogo>
                    <VmaxMark><VmaxCheck />MAX</VmaxMark>
                    <VmaxTag>Move together . Move forward</VmaxTag>
                  </VmaxLogo>
                </PoweredBy>
              </Footer>
            </Main>
          </Below>
        </PageColumn>
        <PageScrollbar>
          <ScrollButton><ArrowGlyph $dir="up" /></ScrollButton>
          <PageThumbWrap>
            <ThumbY $w={13} $h={486} />
            <ScrollButton><ArrowGlyph $dir="down" $color="#a0a0a0" /></ScrollButton>
          </PageThumbWrap>
        </PageScrollbar>
      </Viewport>

      <Taskbar>
        <StartButton><WindowsLogo /></StartButton>
        <SearchBox>
          <SearchGlass size={18} strokeWidth={1.4} />
          Type here to search
        </SearchBox>
        <TaskSlot>
          <svg width="18" height="18" viewBox="0 0 18 18" fill="none" stroke="#fff" strokeWidth="2"><circle cx="9" cy="9" r="7" /></svg>
        </TaskSlot>
        <TaskSlot><TaskViewIcon /></TaskSlot>
        <TaskSlot><EdgeIcon /></TaskSlot>
        <TaskSlot><ExplorerIcon /></TaskSlot>
        <TaskSlot><StoreIcon /></TaskSlot>
        <TaskSlot><MailIcon /></TaskSlot>
        <TaskSlot><CalculatorIcon /></TaskSlot>
        <TaskSlot $active $line={44}><ChromeIcon /></TaskSlot>
        <TaskSlot $line={40}><NotepadIcon /></TaskSlot>
        <TaskSlot $line={37}><PaintIcon /></TaskSlot>
        <Tray>
          <TraySlot $w={24}><ChevronUp size={18} strokeWidth={1.4} /></TraySlot>
          <TraySlot $w={24}><NetworkIcon /></TraySlot>
          <TraySlot $w={24}><Volume2 size={17} strokeWidth={1.2} /></TraySlot>
          <TraySlot $w={34}>ENG</TraySlot>
          <Clock>
            <span>17:10</span>
            <span>17-05-2022</span>
          </Clock>
          <NoticeSlot>
            <NoticeIcon />
            <NoticeBadge>1</NoticeBadge>
          </NoticeSlot>
          <TrayEnd />
        </Tray>
      </Taskbar>

      <GearFab><Settings size={15} strokeWidth={2.4} /></GearFab>
      <Watermark>
        <WatermarkTitle>Activate Windows</WatermarkTitle>
        <WatermarkHint>Go to Settings to activate Windows.</WatermarkHint>
      </Watermark>
    </Screen>
  );
}
